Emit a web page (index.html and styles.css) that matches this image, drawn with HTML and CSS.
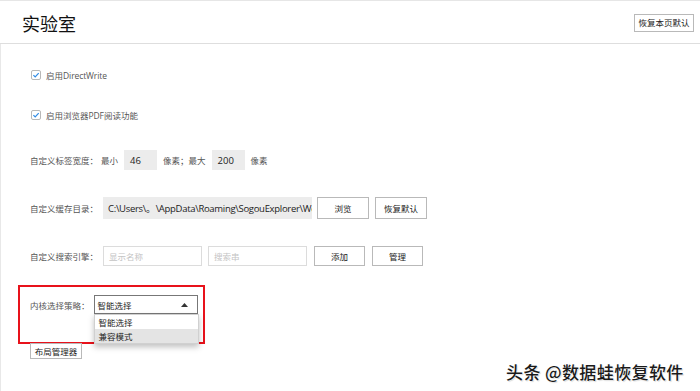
FILE: index.html
```html
<!DOCTYPE html>
<html lang="zh-CN">
<head>
<meta charset="utf-8">
<title>实验室</title>
<link rel="stylesheet" href="styles.css">
</head>
<body>
<div class="page">
  <header class="header">
    <h1 class="title">实验室</h1>
    <button class="btn btn-page-reset">恢复本页默认</button>
  </header>
  <main class="content">
    <div class="row row-check row-1">
      <span class="checkbox"><svg width="10" height="10" viewBox="0 0 10 10"><path d="M2.4 5.1 L4.2 6.9 L7.7 3.1" fill="none" stroke="#2f8be6" stroke-width="1.2"/></svg></span>
      <span class="label">启用<span class="latin">DirectWrite</span></span>
    </div>
    <div class="row row-check row-2">
      <span class="checkbox"><svg width="10" height="10" viewBox="0 0 10 10"><path d="M2.4 5.1 L4.2 6.9 L7.7 3.1" fill="none" stroke="#2f8be6" stroke-width="1.2"/></svg></span>
      <span class="label">启用浏览器<span class="latin">PDF</span>阅读功能</span>
    </div>
    <div class="row row-3">
      <span class="label">自定义标签宽度：</span>
      <span class="label sp-min">最小</span>
      <span class="field field-num">46</span>
      <span class="label">像素；最大</span>
      <span class="field field-num">200</span>
      <span class="label">像素</span>
    </div>
    <div class="row row-4">
      <span class="label">自定义缓存目录：</span>
      <span class="field field-path">C:\Users\。\AppData\Roaming\SogouExplorer\Webkit</span>
      <button class="btn btn-row">浏览</button>
      <button class="btn btn-row">恢复默认</button>
    </div>
    <div class="row row-5">
      <span class="label">自定义搜索引擎：</span>
      <span class="field field-text field-first">显示名称</span>
      <span class="field field-text">搜索串</span>
      <button class="btn btn-row btn-small">添加</button>
      <button class="btn btn-row btn-small">管理</button>
    </div>
    <div class="highlight">
      <div class="row row-kernel">
        <span class="label">内核选择策略：</span>
        <div class="select">
          <span class="select-value">智能选择</span>
          <svg class="select-arrow" width="7" height="4" viewBox="0 0 7 4"><path d="M0 4 L3.5 0 L7 4 Z" fill="#333"/></svg>
          <div class="dropdown">
            <div class="option">智能选择</div>
            <div class="option option-active">兼容模式</div>
          </div>
        </div>
      </div>
    </div>
    <button class="btn btn-layout">布局管理器</button>
  </main>
  <div class="watermark">头条 @数据蛙恢复软件</div>
</div>
</body>
</html>
```

FILE: styles.css
```css
* { box-sizing: border-box; }
html, body { margin: 0; padding: 0; }
body {
  width: 700px;
  height: 391px;
  overflow: hidden;
  background: #fff;
  font-family: "Noto Sans CJK SC", "Noto Sans", sans-serif;
  color: #555;
}
.page {
  position: relative;
  width: 700px;
  height: 391px;
  display: flex;
  flex-direction: column;
  border-top: 1px solid #e6e6e6;
}
.header {
  height: 43px;
  flex: none;
  display: flex;
  align-items: center;
  justify-content: space-between;
  padding: 0 6px 0 22px;
  border-bottom: 1px solid #dedede;
}
.title {
  margin: 0;
  font-size: 18px;
  font-weight: normal;
  color: #111;
  line-height: 1;
  margin-top: 1px;
}
.btn {
  font-family: "Noto Sans CJK SC", "Noto Sans", sans-serif;
  font-size: 8.5px;
  color: #222;
  background: #fff;
  border: 1px solid #b9b9b9;
  padding: 0;
  line-height: 1;
  display: flex;
  align-items: center;
  justify-content: center;
}
.btn-page-reset {
  width: 60px;
  height: 18px;
  margin-top: 1px;
}
.content {
  flex: 1;
  border-left: 1px solid #e8e8e8;
  padding-left: 29px;
  display: flex;
  flex-direction: column;
  align-items: flex-start;
}
.row {
  display: flex;
  align-items: center;
  height: 20px;
  font-size: 8.5px;
}
.label { white-space: nowrap; color: #555; }
.latin {
  font-family: "Open Sans", "Noto Sans", sans-serif;
  font-size: 8.5px;
  letter-spacing: -0.1px;
}
.row-check { padding-left: 1px; gap: 5px; }
.row-1 { margin-top: 21px; }
.row-2 { margin-top: 20px; }
.row-3 { margin-top: 25px; }
.row-4 { margin-top: 27px; height: 22px; }
.row-5 { margin-top: 27px; }
.checkbox {
  width: 10px;
  height: 10px;
  border: 1px solid #b8b8b8;
  border-radius: 2px;
  display: flex;
  align-items: center;
  justify-content: center;
  background: #fff;
}
.checkbox svg { display: block; margin: -1px; }
.sp-min { margin-left: 3px; }
.field {
  height: 20px;
  display: flex;
  align-items: center;
  white-space: nowrap;
  overflow: hidden;
}
.field-num {
  width: 33px;
  background: #ececec;
  color: #222;
  padding-left: 6px;
  font-family: "Open Sans", "Noto Sans", sans-serif;
  font-size: 9.5px;
  margin: 0 6px;
}
.field-path {
  width: 209px;
  height: 22px;
  margin-left: 5px;
  background: #ececec;
  color: #222;
  padding-left: 5px;
  font-family: "Open Sans", "Noto Sans", sans-serif;
  font-size: 9.5px;
  letter-spacing: -0.3px;
  text-overflow: clip;
}
.btn-row {
  width: 52px;
  height: 22px;
  margin-left: 6px;
}
.row-4 .field-path + .btn-row { margin-left: 5px; }
.field-text {
  width: 99px;
  border: 1px solid #dcdcdc;
  color: #c4c4c4;
  padding-left: 5px;
  margin-left: 6px;
}
.field-first { margin-left: 5px; }
.btn-small { height: 20px; width: 51px; margin-left: 7px; }
.highlight {
  margin-top: 19px;
  margin-left: -12px;
  width: 187px;
  height: 59px;
  border: 2px solid #e8121b;
  padding: 8px 0 0 10px;
}
.row-kernel { height: 19px; }
.select {
  position: relative;
  margin-left: 4px;
  width: 104px;
  height: 19px;
  border: 1px solid #777;
  display: flex;
  align-items: center;
  padding-left: 3px;
  color: #222;
}
.select-arrow {
  position: absolute;
  right: 9px;
  top: 7px;
}
.dropdown {
  position: absolute;
  left: -1px;
  top: 18px;
  width: 105px;
  background: #fff;
  border: 1px solid #d0d0d0;
  box-shadow: 0 3px 6px rgba(0,0,0,0.25);
  z-index: 2;
}
.option {
  height: 14px;
  line-height: 14px;
  padding-left: 4px;
  color: #222;
}
.option-active { background: #e4e4e4; }
.btn-layout {
  margin-top: -1px;
  width: 52px;
  height: 16px;
}
.watermark {
  position: absolute;
  left: 506px;
  top: 358px;
  font-size: 17px;
  font-weight: 500;
  letter-spacing: 0.4px;
  color: #1a1a1a;
  white-space: nowrap;
  text-shadow: 0 0 2px #fff, 0 0 2px #fff, 1px 1px 1px rgba(0,0,0,0.2);
}
```
